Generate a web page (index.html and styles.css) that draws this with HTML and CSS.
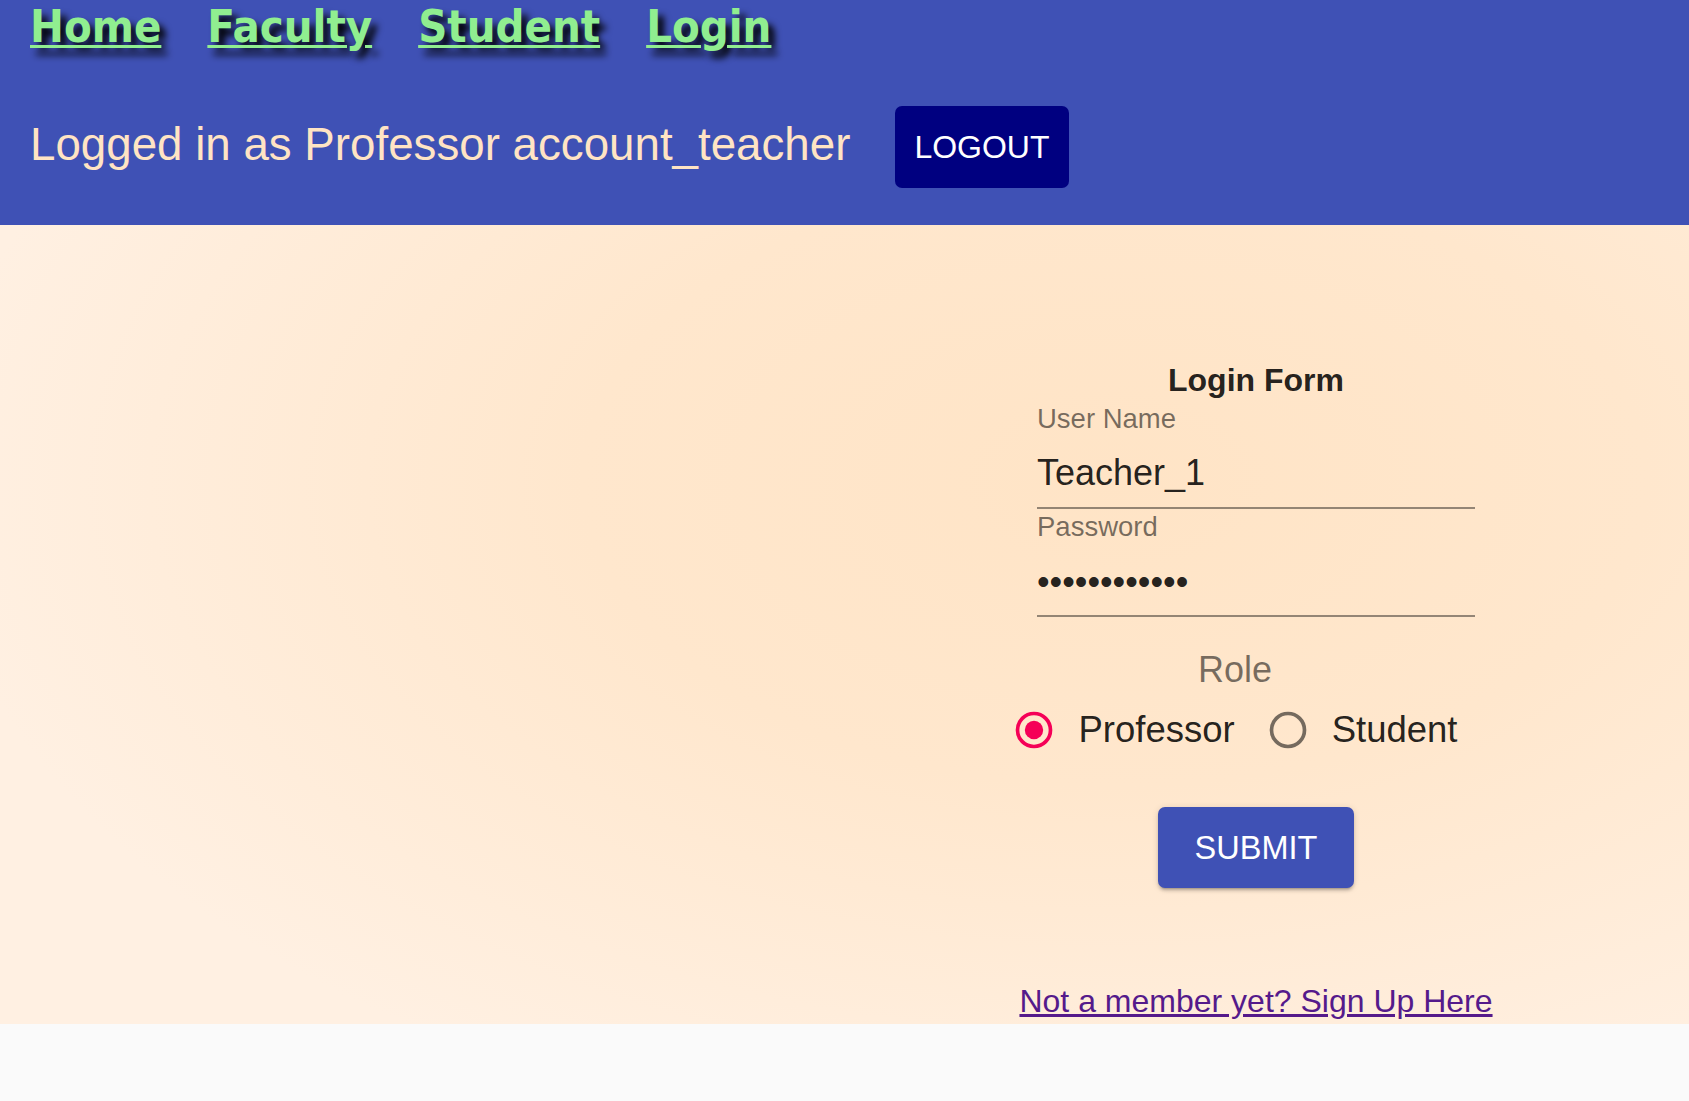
FILE: index.html
```html
<!DOCTYPE html>
<html lang="en">
<head>
<meta charset="utf-8">
<title>Login</title>
<link rel="stylesheet" href="styles.css">
</head>
<body>
<header class="topbar">
  <nav class="nav">
    <a class="nav-link" href="#">Home</a>
    <a class="nav-link" href="#">Faculty</a>
    <a class="nav-link" href="#">Student</a>
    <a class="nav-link" href="#">Login</a>
  </nav>
  <div class="session">
    <span class="session-text">Logged in as Professor account_teacher</span>
    <button class="logout-btn" type="button">LOGOUT</button>
  </div>
</header>
<main class="main">
  <form class="login-form">
    <div class="form-title">Login Form</div>
    <div class="field field-first">
      <label class="field-label" for="user">User Name</label>
      <input class="field-input" id="user" type="text" value="Teacher_1">
    </div>
    <div class="field">
      <label class="field-label" for="pass">Password</label>
      <input class="field-input" id="pass" type="password" value="abcdefghijkl">
    </div>
    <div class="role-label">Role</div>
    <div class="radio-row">
      <label class="radio-item">
        <svg class="radio-icon checked" viewBox="0 0 24 24" width="44" height="44"><circle cx="12" cy="12" r="9" fill="none" stroke="currentColor" stroke-width="2"/><circle cx="12" cy="12" r="5" fill="currentColor"/></svg>
        <span class="radio-text">Professor</span>
      </label>
      <label class="radio-item">
        <svg class="radio-icon" viewBox="0 0 24 24" width="44" height="44"><circle cx="12" cy="12" r="9" fill="none" stroke="currentColor" stroke-width="2"/></svg>
        <span class="radio-text">Student</span>
      </label>
    </div>
    <button class="submit-btn" type="button">SUBMIT</button>
    <a class="signup-link" href="#">Not a member yet? Sign Up Here</a>
  </form>
</main>
</body>
</html>
```

FILE: styles.css
```css
html, body {
  margin: 0;
  padding: 0;
}
body {
  background: #fafafa;
  font-family: "Liberation Sans", Arial, sans-serif;
}

.topbar {
  background: #3f51b5;
  padding: 1px 0 37px 30px;
}

.nav {
  display: flex;
  gap: 46px;
  height: 52px;
}
.nav-link {
  font-family: "DejaVu Sans Condensed", "DejaVu Sans", Verdana, sans-serif;
  font-weight: bold;
  font-size: 45px;
  line-height: 52px;
  color: #90ee90;
  text-decoration: underline;
  text-decoration-thickness: 3px;
  text-underline-offset: 3px;
  text-shadow: 6px 7px 7px #000000;
}

.session {
  display: flex;
  align-items: flex-start;
  gap: 45px;
  margin-top: 53px;
}
.session-text {
  margin-top: 13px;
  font-size: 45.7px;
  color: #ffe4c4;
}
.logout-btn {
  font-family: "Liberation Sans", Arial, sans-serif;
  font-size: 32px;
  line-height: 36px;
  color: #ffffff;
  background: #000080;
  border: none;
  border-radius: 7px;
  padding: 23px 19px 23px;
  margin: 0;
}

.main {
  display: flex;
  justify-content: flex-end;
  padding: 135px 183px 5px 0;
  background: radial-gradient(ellipse 70% 85% at 66% 32%, #ffe4c6 0%, #ffe7cd 45%, #fff0e2 100%);
}

.login-form {
  width: 500px;
  display: flex;
  flex-direction: column;
  align-items: center;
  margin: 0;
}

.form-title {
  font-weight: bold;
  font-size: 32px;
  line-height: 40px;
  color: rgba(0, 0, 0, 0.87);
}

.field {
  width: 438px;
  display: flex;
  flex-direction: column;
  margin-top: 2px;
}
.field-first {
  margin-top: 3px;
}
.field-label {
  font-size: 27.5px;
  line-height: 32px;
  color: rgba(0, 0, 0, 0.54);
}
.field-input {
  font-family: "Liberation Sans", Arial, sans-serif;
  font-size: 36px;
  line-height: 44px;
  height: 44px;
  box-sizing: content-box;
  margin: 16px 0 0;
  padding: 0 0 12px;
  border: none;
  border-bottom: 2px solid rgba(0, 0, 0, 0.42);
  background: transparent;
  color: rgba(0, 0, 0, 0.87);
  outline: none;
  width: 100%;
}
.field + .field .field-input {
  margin-top: 17px;
  padding-bottom: 11px;
}

.role-label {
  margin-top: 32px;
  margin-right: 42px;
  font-size: 36px;
  line-height: 42px;
  color: rgba(0, 0, 0, 0.54);
}

.radio-row {
  display: flex;
  align-items: center;
  gap: 31px;
  margin-top: 17px;
  margin-right: 42px;
  height: 44px;
}
.radio-item {
  display: flex;
  align-items: center;
  gap: 22px;
}
.radio-icon {
  display: block;
  color: rgba(0, 0, 0, 0.54);
}
.radio-icon.checked {
  color: #f50057;
}
.radio-text {
  font-size: 36.5px;
  line-height: 44px;
  color: rgba(0, 0, 0, 0.87);
}

.submit-btn {
  margin-top: 55px;
  font-family: "Liberation Sans", Arial, sans-serif;
  font-size: 32.5px;
  line-height: 36px;
  color: #ffffff;
  background: #3f51b5;
  border: none;
  border-radius: 7px;
  padding: 23px 37px 22px;
  box-shadow: 0 4px 2px -3px rgba(0, 0, 0, 0.2), 0 3px 3px 0 rgba(0, 0, 0, 0.14), 0 1px 7px 0 rgba(0, 0, 0, 0.12);
}

.signup-link {
  margin-top: 95px;
  font-size: 32px;
  line-height: 36px;
  color: #551a8b;
  text-decoration: underline;
}
```
